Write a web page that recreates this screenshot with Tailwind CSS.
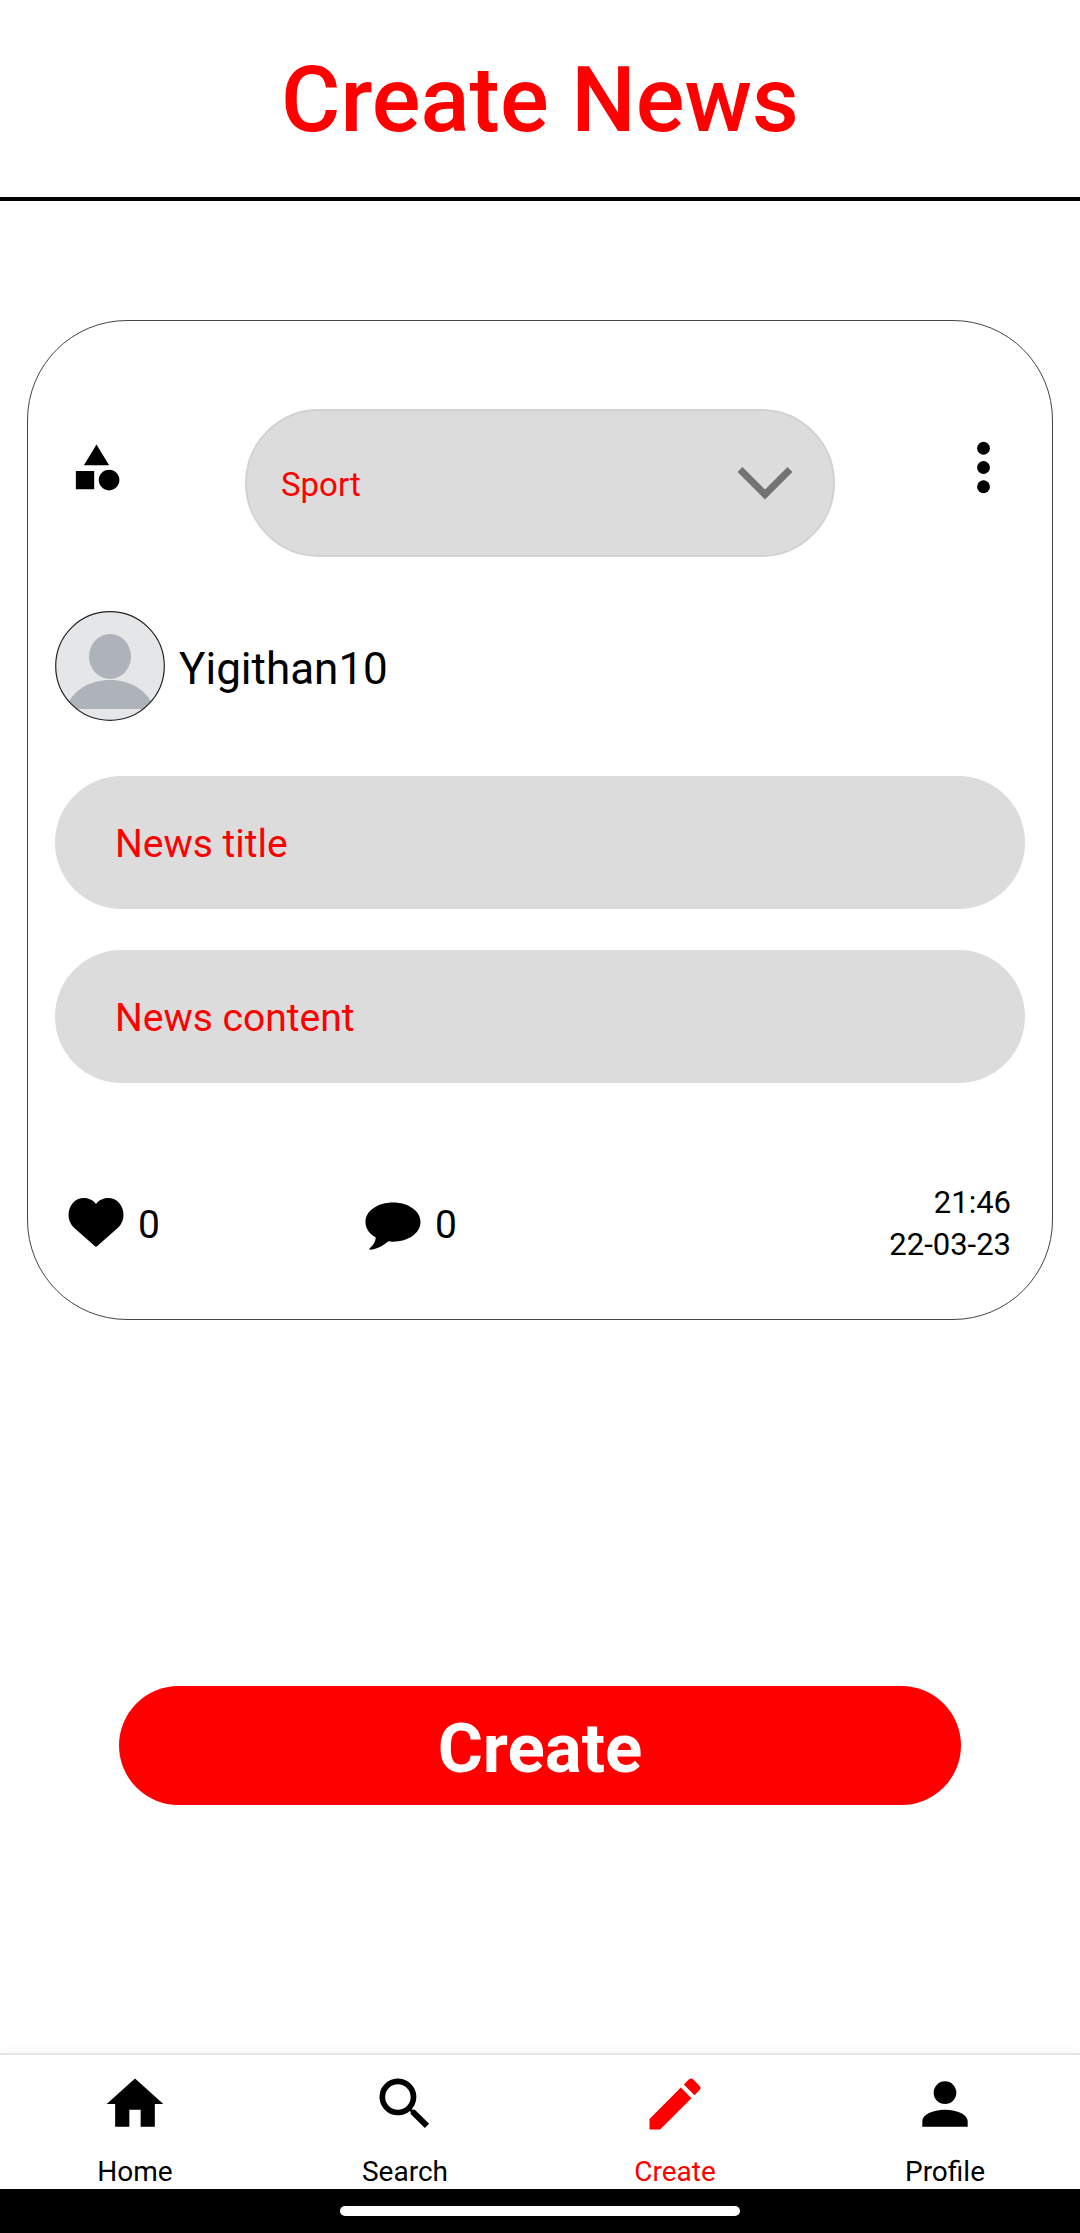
<!DOCTYPE html>
<html lang="en">
<head>
<meta charset="utf-8">
<meta name="viewport" content="width=device-width, initial-scale=1">
<title>Create News</title>
<script src="https://cdn.jsdelivr.net/npm/@tailwindcss/browser@4"></script>
</head>
<body class="flex min-h-screen flex-col bg-white font-['Roboto',sans-serif] text-black">
  <header class="border-b-4 border-black pt-11 pb-[41px] text-center">
    <h1 class="text-[91px] leading-[112px] font-medium text-[#ff0000]">Create News</h1>
  </header>

  <main class="flex flex-1 flex-col px-[27px] pt-[119px]">
    <form class="flex flex-col">
      <section class="rounded-[100px] border border-[#444444] px-[27px] pt-[88px] pb-[53px]">
        <div class="grid grid-cols-[190px_1fr_190px] items-start">
          <div class="flex h-[116px] items-center pl-[14px]">
            <svg class="size-[55px]" viewBox="0 0 24 24" aria-hidden="true"><path d="M11 13.500V21.500H3V13.500H11M12 2L17.500 11H6.500L12 2M17.500 13C20 13 22 15 22 17.500C22 20 20 22 17.500 22C15 22 13 20 13 17.500C13 15 15 13 17.500 13Z"/></svg>
          </div>
          <div class="grid items-center">
            <select aria-label="Category" class="col-start-1 row-start-1 h-[148px] w-full appearance-none rounded-full border-2 border-[#d2d2d2] bg-[#dcdcdc] pt-1 pl-[34px] text-[33px] text-[#ff0000]">
              <option>Sport</option>
            </select>
            <svg class="pointer-events-none col-start-1 row-start-1 mr-[42px] h-9 w-14 justify-self-end" viewBox="0 0 56 36" fill="none" stroke="#737373" stroke-width="7" aria-hidden="true"><path d="M3 4.500L28 29.500L53 4.500"/></svg>
          </div>
          <button type="button" aria-label="More options" class="flex h-[116px] items-center justify-end pr-[3px]">
            <svg class="size-[77px]" viewBox="0 0 24 24" aria-hidden="true"><circle cx="12" cy="6" r="2"/><circle cx="12" cy="12" r="2"/><circle cx="12" cy="18" r="2"/></svg>
          </button>
        </div>

        <div class="mt-[54px] flex items-center gap-[14px]">
          <svg class="size-[110px]" viewBox="0 0 110 110" aria-hidden="true">
            <clipPath id="face"><circle cx="55" cy="55" r="54"/></clipPath>
            <circle cx="55" cy="55" r="54" fill="#e4e6e8"/>
            <g clip-path="url(#face)" fill="#adb3b8"><ellipse cx="55" cy="45.500" rx="21" ry="22.500"/><path d="M10 98C18 78 36 69 55 69S92 78 100 98Z"/></g>
            <circle cx="55" cy="55" r="54.300" fill="none" stroke="#222" stroke-width="1.200"/>
          </svg>
          <span class="pt-[6px] text-[44px] leading-[52px]">Yigithan10</span>
        </div>

        <div class="mt-[55px] flex flex-col gap-[41px]">
          <input type="text" aria-label="News title" placeholder="News title" class="h-[133px] w-full rounded-full bg-[#dcdcdc] px-[60px] pt-[2px] text-[39px] placeholder:text-[#ff0000]">
          <input type="text" aria-label="News content" placeholder="News content" class="h-[133px] w-full rounded-full bg-[#dcdcdc] px-[60px] pt-[2px] text-[39px] placeholder:text-[#ff0000]">
        </div>

        <div class="mt-[99px] flex items-center pr-[14px] pl-2">
          <button type="button" aria-label="Like" class="flex w-[297px] items-center gap-[9px] text-[39px] leading-[48px]">
            <svg class="size-[66px]" viewBox="0 0 66 66" aria-hidden="true"><path d="M33 55.500C32 55.500 31.500 54.800 30 53.400L10.500 36.200C7.500 33.200 5.500 29 5.500 24C5.500 14.500 12 7 21 7C26 7 30.500 9.500 33 13C35.500 9.500 40 7 45 7C54 7 60.500 14.500 60.500 24C60.500 29 58.500 33.200 55.500 36.200L36 53.400C34.500 54.800 34 55.500 33 55.500Z"/></svg>
            <span class="pt-[2px]">0</span>
          </button>
          <button type="button" aria-label="Comments" class="flex items-center gap-[9px] text-[39px] leading-[48px]">
            <svg class="size-[66px]" viewBox="0 0 66 66" aria-hidden="true"><path d="M33 11.500C48.500 11.500 60.500 20 60.500 31S48.500 50.700 33 50.700L28.500 50.300C22 55.500 16 58.500 10 58.800C9.300 58.800 9.300 57.800 9.800 57.200C13 54.500 15.500 51 15.800 46.500C9.500 43 5.500 37.500 5.500 31C5.500 20 17.500 11.500 33 11.500Z"/></svg>
            <span class="pt-[2px]">0</span>
          </button>
          <div class="ml-auto text-right text-[31px] leading-[42px]">
            <time class="block">21:46</time>
            <time class="block">22-03-23</time>
          </div>
        </div>
      </section>

      <button type="submit" class="mx-[92px] mt-[366px] h-[119px] rounded-full bg-[#ff0000] pt-[6px] text-[69px] leading-[80px] font-bold text-white">Create</button>
    </form>
  </main>

  <nav class="grid h-[136px] grid-cols-4 border-t-2 border-[#e6e6e6] pt-[15px] text-[28px] leading-[32px] shadow-[0_-2px_10px_rgba(0,0,0,0.04)]">
    <a href="#home" class="flex flex-col items-center gap-[18px]">
      <svg class="size-[68px]" viewBox="0 0 24 24" aria-hidden="true"><path d="M10 20V14H14V20H19V12H22L12 3L2 12H5V20H10Z"/></svg>
      <span>Home</span>
    </a>
    <a href="#search" class="flex flex-col items-center gap-[18px]">
      <svg class="size-[68px]" viewBox="0 0 24 24" aria-hidden="true"><path d="M15.500 14H14.710L14.430 13.730A6.500 6.500 0 1 0 13.730 14.430L14 14.710V15.500L19 20.490L20.490 19L15.500 14ZM9.500 14A4.500 4.500 0 1 1 9.500 5A4.500 4.500 0 0 1 9.500 14Z"/></svg>
      <span>Search</span>
    </a>
    <a href="#create" aria-current="page" class="flex flex-col items-center gap-[18px] text-[#ff0000]">
      <svg class="size-[68px]" viewBox="0 0 24 24" fill="currentColor" aria-hidden="true"><path d="M20.710 7.040C21.100 6.650 21.100 6 20.710 5.630L18.370 3.290C18 2.900 17.350 2.900 16.960 3.290L15.120 5.120L18.870 8.870M3 17.250V21H6.750L17.810 9.930L14.060 6.180L3 17.250Z"/></svg>
      <span>Create</span>
    </a>
    <a href="#profile" class="flex flex-col items-center gap-[18px]">
      <svg class="size-[68px]" viewBox="0 0 24 24" aria-hidden="true"><path d="M12 4A4 4 0 0 1 16 8A4 4 0 0 1 12 12A4 4 0 0 1 8 8A4 4 0 0 1 12 4M12 14C16.420 14 20 15.790 20 18V20H4V18C4 15.790 7.580 14 12 14Z"/></svg>
      <span>Profile</span>
    </a>
  </nav>
  <div class="flex h-11 items-center justify-center bg-black">
    <div class="h-[10px] w-[37%] rounded-full bg-white"></div>
  </div>
</body>
</html>
